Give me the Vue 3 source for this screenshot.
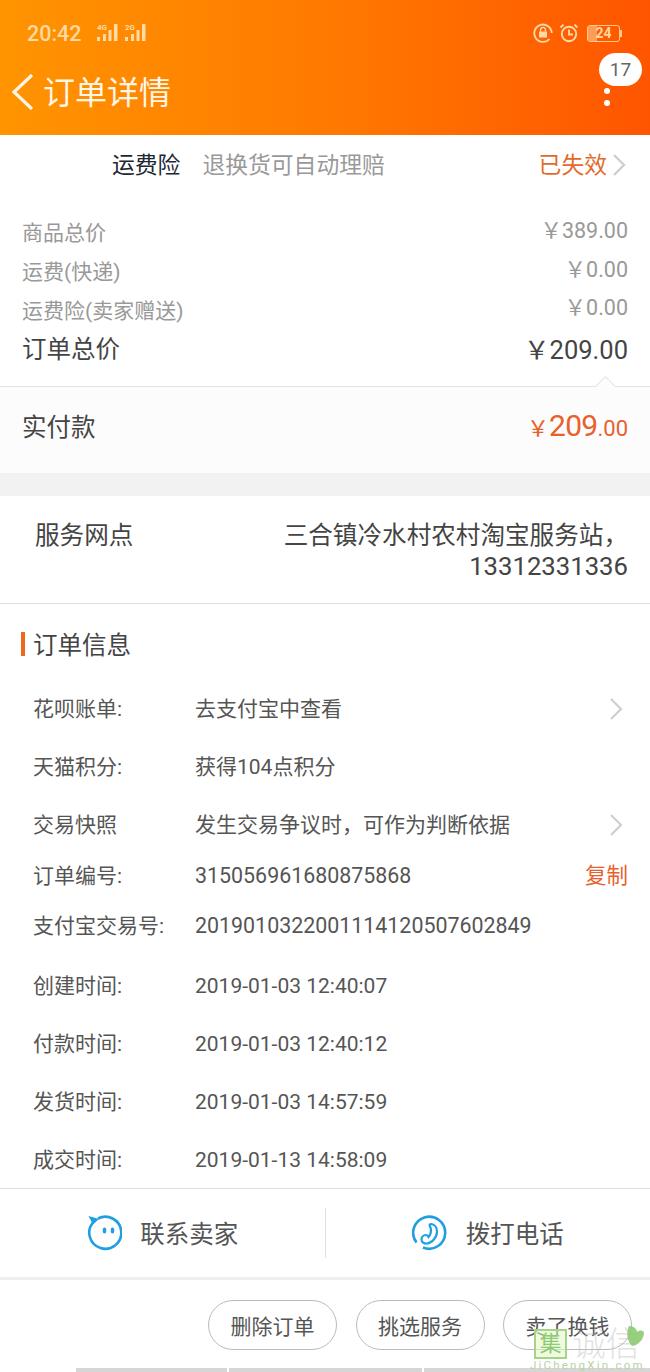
<script setup>
const priceRows = [
  { label: '商品总价', value: '￥389.00' },
  { label: '运费(快递)', value: '￥0.00' },
  { label: '运费险(卖家赠送)', value: '￥0.00' }
]

const infoRows = [
  { label: '花呗账单:', value: '去支付宝中查看', arrow: true },
  { label: '天猫积分:', value: '获得104点积分' },
  { label: '交易快照', value: '发生交易争议时，可作为判断依据', arrow: true },
  { label: '订单编号:', value: '315056961680875868', copy: true, cls: 'order-no' },
  { label: '支付宝交易号:', value: '2019010322001114120507602849', cls: 'trade-no' },
  { label: '创建时间:', value: '2019-01-03 12:40:07' },
  { label: '付款时间:', value: '2019-01-03 12:40:12' },
  { label: '发货时间:', value: '2019-01-03 14:57:59' },
  { label: '成交时间:', value: '2019-01-13 14:58:09' }
]

const actions = ['删除订单', '挑选服务', '卖了换钱']
</script>

<template>
  <div class="page">
    <!-- Header -->
    <header class="header">
      <div class="status-bar">
        <span class="clock">20:42</span>
        <div class="signals">
          <svg width="23" height="20" viewBox="0 0 23 20"><text x="1" y="7" class="net">4G</text><g fill="#ffdba8"><rect x="1" y="14" width="3" height="4"/><rect x="7" y="11" width="3" height="7"/><rect x="12.500" y="7" width="3" height="11"/><rect x="18" y="1" width="3.500" height="17"/></g></svg>
          <svg width="23" height="20" viewBox="0 0 23 20"><text x="1" y="7" class="net">2G</text><g fill="#ffdba8"><rect x="1" y="14" width="3" height="4"/><rect x="7" y="11" width="3" height="7"/><rect x="12.500" y="7" width="3" height="11"/><rect x="18" y="1" width="3.500" height="17"/></g></svg>
        </div>
        <div class="status-right">
          <svg width="20" height="20" viewBox="0 0 20 20" fill="none" stroke="#ffd9a8" stroke-width="1.800"><path d="M16.500 16A8.700 8.700 0 1 1 18.700 10"/><rect x="6" y="8.500" width="8" height="6" fill="#ffd9a8" stroke="none"/><path d="M7.600 8.500V6.800a2.400 2.400 0 0 1 4.800 0v1.700" stroke-width="1.400"/></svg>
          <svg width="20" height="20" viewBox="0 0 20 20" fill="none" stroke="#ffd9a8" stroke-width="1.900"><circle cx="10" cy="11" r="7.200"/><path d="M10 6.500V11.500H14"/><path d="M1.500 4.500L4.500 1.800M18.500 4.500L15.500 1.800"/></svg>
          <div class="battery"><span class="battery-num">24</span><i class="battery-fill"></i></div>
          <i class="battery-cap"></i>
        </div>
      </div>
      <div class="nav">
        <svg class="back" width="24" height="38" viewBox="0 0 24 38" fill="none" stroke="#fff4e6" stroke-width="3.200"><path d="M21 2L3 19L21 36"/></svg>
        <h1 class="title">订单详情</h1>
        <div class="more">
          <span class="badge">17</span>
          <i class="dot"></i>
          <i class="dot"></i>
        </div>
      </div>
    </header>

    <!-- Freight insurance -->
    <div class="insurance">
      <span class="ins-name">运费险</span>
      <span class="ins-desc">退换货可自动理赔</span>
      <span class="ins-status">已失效</span>
      <svg width="14" height="24" viewBox="0 0 14 24" fill="none" stroke="#cfcfcf" stroke-width="2.400"><path d="M2 2L12 12L2 22"/></svg>
    </div>

    <!-- Prices -->
    <div class="prices">
      <div v-for="row in priceRows" :key="row.label" class="price-row">
        <span>{{ row.label }}</span>
        <span class="num">{{ row.value }}</span>
      </div>
      <div class="price-total">
        <span>订单总价</span>
        <span class="num">￥209.00</span>
      </div>
    </div>

    <div class="paid">
      <i class="notch"></i>
      <span>实付款</span>
      <span class="paid-num"><small>￥</small><b>209</b><small>.00</small></span>
    </div>

    <div class="gap"></div>

    <!-- Service point -->
    <div class="service">
      <span class="service-label">服务网点</span>
      <span class="service-value">三合镇冷水村农村淘宝服务站，<br /><span class="phone">13312331336</span></span>
    </div>

    <!-- Order info -->
    <section class="info">
      <h2 class="info-title">订单信息</h2>
      <div v-for="row in infoRows" :key="row.label" class="info-row" :class="row.cls">
        <span class="info-label">{{ row.label }}</span>
        <span class="info-value">{{ row.value }}</span>
        <svg v-if="row.arrow" class="info-arrow" width="14" height="24" viewBox="0 0 14 24" fill="none" stroke="#cfcfcf" stroke-width="2.200"><path d="M2 2L12 12L2 22"/></svg>
        <span v-if="row.copy" class="copy">复制</span>
      </div>
    </section>

    <!-- Contact -->
    <div class="contact">
      <div class="contact-item">
        <svg width="36" height="36" viewBox="0 0 36 36" fill="none"><path d="M7 7.500A16 16 0 1 0 12 3.500" stroke="#1f9fe0" stroke-width="2.600"/><path d="M2.500 1L13 4L7 9.500Z" fill="#1f9fe0"/><ellipse cx="18.500" cy="15.500" rx="1.800" ry="3" fill="#1f9fe0"/><ellipse cx="26.500" cy="15.500" rx="1.800" ry="3" fill="#1f9fe0"/></svg>
        <span>联系卖家</span>
      </div>
      <i class="contact-divider"></i>
      <div class="contact-item">
        <svg width="36" height="36" viewBox="0 0 36 36" fill="none" stroke="#1f9fe0" stroke-width="2.600"><path d="M4.500 27.500A16 16 0 1 1 11 32.500"/><path d="M19.500 9c3 .5 5.500 3.500 5.500 7.500 0 6-5 11.500-10 12-3 .3-5.500-1.500-5.500-4 0-2.500 2-4.500 4.500-4.500 1 0 2 .8 2.500 2 1.500-1.500 2.500-4.500 2.500-7 0-1.500-.5-2.500-1-3.500-.8-1.500-.6-2.500 1.500-2.500z" stroke-width="2.200"/></svg>
        <span>拨打电话</span>
      </div>
    </div>

    <!-- Actions -->
    <div class="actions">
      <button v-for="a in actions" :key="a" class="action-btn">{{ a }}</button>
    </div>

    <div class="home-bars">
      <i class="bar-a"></i>
      <i class="bar-b"></i>
      <i class="bar-c"></i>
    </div>

    <!-- Watermark -->
    <div class="watermark">
      <div class="wm-top">
        <span class="wm-box">集</span>
        <span class="wm-cn">诚信</span>
        <svg class="wm-leaf" width="20" height="22" viewBox="0 0 20 22"><path d="M4 1c5 0 8 3 8 6 2-2 5-2 7 0 0 7-5 13-12 14C2 16 1 7 4 1z" fill="#8ccb72"/></svg>
      </div>
      <div class="wm-url">JiChengXin.com</div>
    </div>
  </div>
</template>

<style scoped>
.page {
  position: relative;
  width: 650px;
  height: 1372px;
  overflow: hidden;
  background: #fff;
  font-family: Roboto, "Noto Sans CJK SC", sans-serif;
  color: #444;
}

.header {
  height: 135px;
  background: linear-gradient(90deg, #ff9400 0%, #ff7a00 50%, #ff5500 100%);
  box-sizing: border-box;
  padding-top: 20px;
}

.status-bar {
  display: flex;
  align-items: center;
  height: 26px;
  padding: 0 28px 0 27px;
  color: #ffd9a0;
}

.clock {
  font-size: 21.500px;
  font-weight: 500;
}

.signals {
  display: flex;
  gap: 5px;
  margin-left: 14px;
}

.net {
  font-size: 8px;
  font-weight: 700;
  fill: #ffdba8;
  font-family: Roboto, sans-serif;
}

.status-right {
  display: flex;
  align-items: center;
  margin-left: auto;
  gap: 6px;
}

.battery {
  position: relative;
  width: 31px;
  height: 15px;
  margin-left: 2px;
  border: 1px solid #ffc98f;
  border-radius: 3px;
  overflow: hidden;
}

.battery-fill {
  position: absolute;
  left: 0;
  top: 0;
  bottom: 0;
  width: 9px;
  background: rgba(255, 220, 170, 0.5);
}

.battery-num {
  position: relative;
  z-index: 1;
  display: block;
  text-align: center;
  font-size: 14px;
  line-height: 15px;
  font-weight: 700;
  color: #ffd9a0;
}

.battery-cap {
  width: 2px;
  height: 7px;
  margin-left: -6px;
  background: #ffc98f;
}

.nav {
  position: relative;
  display: flex;
  align-items: center;
  height: 60px;
  margin-top: 16px;
  padding-left: 11px;
}

.back {
  flex: none;
}

.title {
  margin: 2px 0 0 8px;
  font-size: 32px;
  line-height: 44px;
  font-weight: 400;
  color: #fff6e8;
}

.more {
  position: absolute;
  right: 8px;
  top: -9px;
  width: 43px;
}

.badge {
  display: block;
  width: 43px;
  height: 33px;
  margin-bottom: -4px;
  border-radius: 17px;
  background: #fff;
  color: #666;
  font-size: 19px;
  line-height: 33px;
  text-align: center;
}

.dot {
  display: block;
  width: 6px;
  height: 6px;
  margin: 6px 0 0 5px;
  border-radius: 50%;
  background: #fff;
}

.insurance {
  display: flex;
  align-items: center;
  height: 60px;
  box-sizing: border-box;
  padding: 2px 24px 0 112px;
  font-size: 22.800px;
  line-height: 30px;
}

.insurance svg {
  margin-bottom: 2px;
}

.ins-name {
  color: #1d2733;
}

.ins-desc {
  margin-left: 22px;
  color: #999;
}

.ins-status {
  margin-left: auto;
  margin-right: 5px;
  color: #e36a2c;
}

.prices {
  padding: 19px 22px 0;
  font-size: 21px;
  line-height: 28px;
  color: #999;
}

.price-row {
  display: flex;
  justify-content: space-between;
  align-items: center;
  height: 38.700px;
}

.price-row .num {
  margin-bottom: 5px;
  font-size: 21.500px;
}

.price-total {
  display: flex;
  justify-content: space-between;
  align-items: center;
  height: 40px;
  font-size: 24.500px;
  color: #444;
}

.price-total .num {
  font-size: 25.500px;
}

.paid {
  position: relative;
  display: flex;
  justify-content: space-between;
  align-items: center;
  height: 87px;
  margin-top: 16px;
  padding: 0 22px 4px;
  box-sizing: border-box;
  background: #fcfcfc;
  border-top: 1px solid #e2e2e2;
  font-size: 24.500px;
  line-height: 34px;
}

.notch {
  position: absolute;
  right: 37px;
  top: -8px;
  width: 14px;
  height: 14px;
  background: #fcfcfc;
  border-left: 1px solid #e2e2e2;
  border-top: 1px solid #e2e2e2;
  transform: rotate(45deg);
}

.paid-num {
  margin-bottom: 2px;
  color: #e8602c;
}

.paid-num b {
  font-size: 30px;
  font-weight: 400;
  letter-spacing: -0.700px;
}

.paid-num small {
  font-size: 22px;
}

.gap {
  height: 23px;
  background: #f2f2f2;
}

.service {
  display: flex;
  justify-content: space-between;
  align-items: flex-start;
  height: 108px;
  padding: 25px 22px 0 35px;
  box-sizing: border-box;
  border-bottom: 1px solid #ddd;
  font-size: 24.600px;
  line-height: 30px;
}

.service-value {
  text-align: right;
}

.phone {
  font-size: 25.700px;
}

.info {
  padding: 0 22px 0 33px;
  height: 585px;
  box-sizing: border-box;
  border-bottom: 1px solid #ddd;
}

.info-title {
  position: relative;
  margin: 0;
  height: 75.500px;
  font-size: 24.500px;
  font-weight: 400;
  line-height: 84px;
}

.info-title::before {
  content: "";
  position: absolute;
  left: -12px;
  top: 28px;
  width: 4px;
  height: 24px;
  background: #f0681e;
}

.info-row {
  display: flex;
  align-items: center;
  height: 58.300px;
  font-size: 21px;
  line-height: 30px;
  color: #555;
}

.info-row.order-no {
  height: 44px;
}

.info-row.trade-no {
  height: 58px;
  padding-bottom: 2px;
  box-sizing: border-box;
}

.order-no .info-value,
.trade-no .info-value {
  font-size: 21.400px;
}

.info-label {
  width: 162px;
  flex: none;
}

.info-value {
  flex: 1;
}

.info-arrow {
  margin-right: 5px;
}

.copy {
  color: #e8602c;
  font-size: 21.500px;
}

.contact {
  display: flex;
  align-items: center;
  height: 88px;
}

.contact-item {
  flex: 1;
  display: flex;
  align-items: center;
  justify-content: center;
  gap: 18px;
  font-size: 24.500px;
  line-height: 34px;
  color: #555;
}

.contact-item span {
  margin-top: 3px;
}

.contact-divider {
  width: 1px;
  height: 50px;
  background: #e0e0e0;
}

.actions {
  display: flex;
  justify-content: flex-end;
  gap: 18.500px;
  height: 95px;
  box-sizing: border-box;
  padding: 20px 18px 0 0;
  border-top: 3px solid #eee;
}

.action-btn {
  width: 129px;
  height: 50px;
  padding: 0;
  border: 1px solid #bbb;
  border-radius: 25px;
  background: #fff;
  color: #555;
  font-family: inherit;
  font-size: 21px;
}

.home-bars {
  position: absolute;
  left: 76px;
  right: 0;
  bottom: 0;
  display: flex;
  gap: 2px;
  height: 4px;
}

.home-bars i {
  display: block;
  background: #d6d6d6;
}

.bar-a {
  width: 151px;
}

.bar-b {
  width: 193px;
}

.bar-c {
  flex: 1;
}

.watermark {
  position: absolute;
  right: 0;
  bottom: 0;
  width: 120px;
  height: 50px;
  color: #b5d3a4;
}

.wm-top {
  display: flex;
  align-items: center;
  height: 30px;
  margin-top: 7px;
}

.wm-box {
  width: 33px;
  height: 30px;
  margin-left: 4px;
  border: 2px solid #a5d488;
  box-sizing: border-box;
  background: rgba(225, 245, 195, 0.55);
  color: #8ccb72;
  font-size: 22px;
  line-height: 26px;
  text-align: center;
}

.wm-cn {
  margin-left: 5px;
  font-size: 34px;
  line-height: 30px;
  font-weight: 300;
  color: rgba(190, 190, 190, 0.45);
  white-space: nowrap;
}

.wm-leaf {
  position: absolute;
  right: 5px;
  top: 3px;
  opacity: 0.9;
}

.wm-url {
  font-size: 11.500px;
  line-height: 13px;
  letter-spacing: 2.200px;
  white-space: nowrap;
}
</style>

<style>
html, body {
  margin: 0;
  background: #fff;
}
</style>
